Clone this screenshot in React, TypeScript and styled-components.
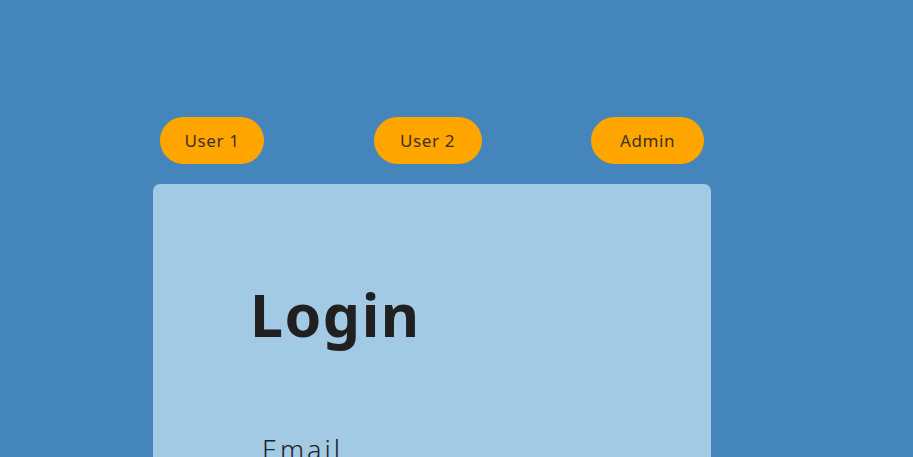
import React from "react";
import styled, { createGlobalStyle } from "styled-components";

const GlobalStyle = createGlobalStyle`
  body {
    margin: 0;
    background: #4486bc;
    font-family: "Montserrat", "Noto Sans", sans-serif;
  }
`;

const Page = styled.div`
  min-height: 100vh;
  padding-top: 117px;
  padding-left: 153px;
  box-sizing: border-box;
`;

const Wrapper = styled.div`
  width: 558px;
`;

const UserBar = styled.div`
  display: flex;
  justify-content: space-between;
  padding: 0 7px;
  margin-bottom: 20px;
`;

const UserButton = styled.button<{ $w: number }>`
  width: ${(p) => p.$w}px;
  height: 47px;
  border: none;
  border-radius: 24px;
  background: #ffa500;
  color: #3a3226;
  font-family: "Noto Sans", sans-serif;
  font-size: 17px;
  letter-spacing: 0.6px;
  cursor: pointer;
`;

const Card = styled.div`
  background: #a3cae5;
  border-radius: 7px;
  padding: 95px 97px 40px;
  height: 400px;
`;

const Title = styled.h1`
  margin: 0;
  font-family: "Noto Sans", sans-serif;
  font-size: 59px;
  font-weight: 700;
  letter-spacing: 1.5px;
  line-height: 70px;
  color: #202020;
`;

const Label = styled.label`
  display: block;
  margin: 82px 0 0 12px;
  font-family: "Noto Sans", sans-serif;
  font-size: 27px;
  font-weight: 300;
  letter-spacing: 3px;
  color: #222;
`;

export default function App() {
  const users = [
    { name: "User 1", w: 104 },
    { name: "User 2", w: 108 },
    { name: "Admin", w: 113 },
  ];
  return (
    <>
      <GlobalStyle />
      <Page>
        <Wrapper>
          <UserBar>
            {users.map((u) => (
              <UserButton key={u.name} $w={u.w}>
                {u.name}
              </UserButton>
            ))}
          </UserBar>
          <Card>
            <Title>Login</Title>
            <Label>Email</Label>
          </Card>
        </Wrapper>
      </Page>
    </>
  );
}
